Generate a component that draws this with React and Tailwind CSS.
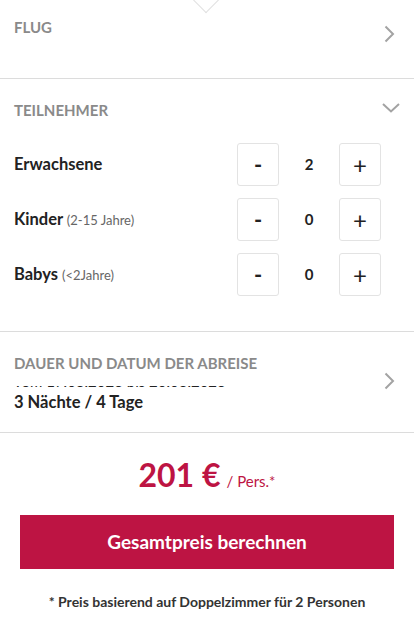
import { useState } from 'react'

const Chevron = ({ dir = 'right' }) => (
  dir === 'right' ? (
    <svg width="11" height="18" viewBox="0 0 11 18" fill="none" stroke="#a3a3a3" strokeWidth="2">
      <path d="M1.5 1.5 L9 9 L1.5 16.5"/>
    </svg>
  ) : (
    <svg width="18" height="10" viewBox="0 0 18 10" fill="none" stroke="#a3a3a3" strokeWidth="2">
      <path d="M1 1 L9 8.5 L17 1"/>
    </svg>
  )
)

function Counter({ label, hint, value, onChange }) {
  return (
    <div className="flex items-center justify-between h-[43px]">
      <div className="text-[16.5px] font-bold text-[#222]">
        {label} {hint && <span className="text-[13px] font-normal text-[#666]">{hint}</span>}
      </div>
      <div className="flex items-center">
        <button onClick={() => onChange(Math.max(0, value - 1))} className="w-[42px] h-[43px] border border-[#e3e3e3] rounded-[3px] flex items-center justify-center text-[22px] font-bold text-[#222] leading-none">-</button>
        <div className="w-[60px] text-center text-[15px] font-bold text-[#222]">{value}</div>
        <button onClick={() => onChange(value + 1)} className="w-[42px] h-[43px] border border-[#e3e3e3] rounded-[3px] flex items-center justify-center text-[24px] font-normal text-[#222] leading-none">+</button>
      </div>
    </div>
  )
}

export default function App() {
  const [adults, setAdults] = useState(2)
  const [kids, setKids] = useState(0)
  const [babies, setBabies] = useState(0)

  return (
    <div className="relative w-[414px] bg-white overflow-hidden" style={{ fontFamily: 'Lato, "Noto Sans", sans-serif' }}>
      <div className="absolute left-[196px] top-[-11px] w-[20px] h-[20px] rotate-45 border-r border-b border-[#e0e0e0] bg-white"></div>

      <div className="h-[79px] border-b border-[#dcdcdc] pl-[14px] pr-[19px] flex justify-between">
        <div className="pt-[17px] text-[15px] font-bold text-[#8a8a8a] uppercase leading-[20px]">Flug</div>
        <div className="pt-[25px]"><Chevron /></div>
      </div>

      <div className="border-b border-[#dcdcdc] pl-[14px] pt-[21px] pb-[35px]">
        <div className="flex justify-between items-center h-[20px] pr-[14px]">
          <div className="text-[15px] font-bold text-[#8a8a8a] uppercase">Teilnehmer</div>
          <div className="-mt-[4px]"><Chevron dir="down" /></div>
        </div>
        <div className="mt-[23px] pr-[33px] flex flex-col gap-[12px]">
          <Counter label="Erwachsene" value={adults} onChange={setAdults} />
          <Counter label="Kinder" hint="(2-15 Jahre)" value={kids} onChange={setKids} />
          <Counter label="Babys" hint="(<2Jahre)" value={babies} onChange={setBabies} />
        </div>
      </div>

      <div className="h-[101px] border-b border-[#dcdcdc] pl-[14px] pr-[19px] flex justify-between">
        <div className="pt-[21px]">
          <div className="text-[15px] font-bold text-[#8a8a8a] uppercase leading-[20px]">Dauer und Datum der Abreise</div>
          <div className="mt-[13px] h-[3px] overflow-hidden">
            <div className="-mt-[13px] text-[15px] leading-[16px] text-[#222]">vom 17.03.2023 bis 20.03.2023</div>
          </div>
          <div className="mt-[3px] text-[16.5px] font-bold text-[#222] leading-[20px]">3 Nächte / 4 Tage</div>
        </div>
        <div className="pt-[40px]"><Chevron /></div>
      </div>

      <div className="pt-[22px] text-center text-[#bd1443]">
        <span className="text-[32px] font-bold leading-[40px]">201 €</span>
        <span className="text-[15px] ml-[6px]">/ Pers.*</span>
      </div>

      <div className="px-[20px] mt-[20px]">
        <button className="w-full h-[54px] bg-[#bd1443] text-white text-[19px] font-bold">Gesamtpreis berechnen</button>
      </div>

      <div className="pt-[22px] pb-[10px] text-center text-[14px] font-bold text-[#333]">* Preis basierend auf Doppelzimmer für 2 Personen</div>
    </div>
  )
}
